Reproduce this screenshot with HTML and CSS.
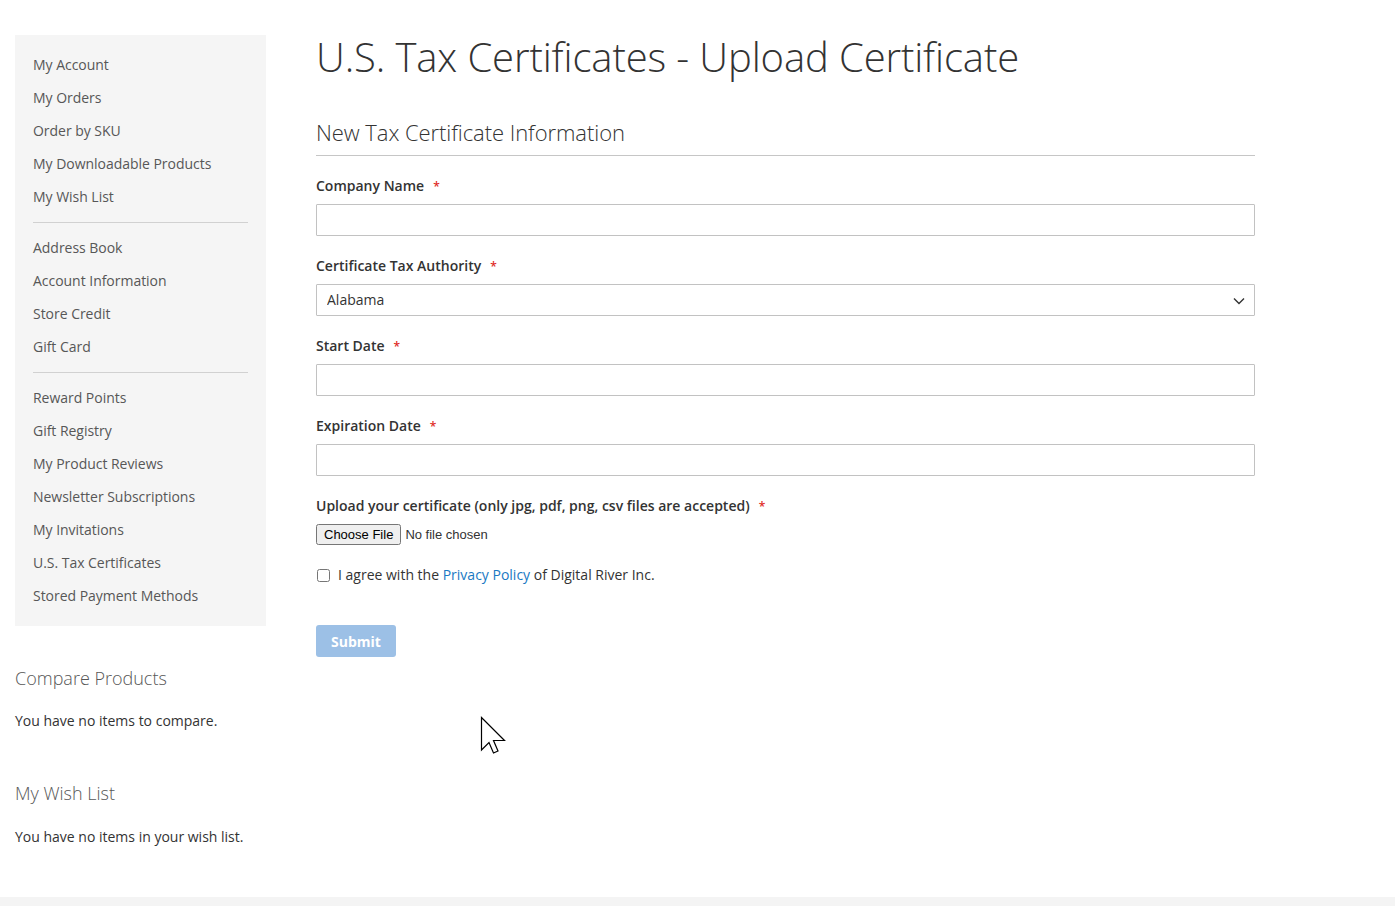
FILE: index.html
```html
<!DOCTYPE html>
<html lang="en">
<head>
<meta charset="utf-8">
<title>U.S. Tax Certificates - Upload Certificate</title>
<link rel="stylesheet" href="styles.css">
</head>
<body>
<div class="page">
  <aside class="sidebar">
    <nav class="account-nav">
      <ul class="nav-list">
        <li class="nav-item">My Account</li>
        <li class="nav-item">My Orders</li>
        <li class="nav-item">Order by SKU</li>
        <li class="nav-item">My Downloadable Products</li>
        <li class="nav-item">My Wish List</li>
        <li class="nav-delimiter"></li>
        <li class="nav-item">Address Book</li>
        <li class="nav-item">Account Information</li>
        <li class="nav-item">Store Credit</li>
        <li class="nav-item">Gift Card</li>
        <li class="nav-delimiter"></li>
        <li class="nav-item">Reward Points</li>
        <li class="nav-item">Gift Registry</li>
        <li class="nav-item">My Product Reviews</li>
        <li class="nav-item">Newsletter Subscriptions</li>
        <li class="nav-item">My Invitations</li>
        <li class="nav-item">U.S. Tax Certificates</li>
        <li class="nav-item">Stored Payment Methods</li>
      </ul>
    </nav>
    <div class="side-block compare-block">
      <div class="side-title">Compare Products</div>
      <div class="side-text">You have no items to compare.</div>
    </div>
    <div class="side-block wish-block">
      <div class="side-title">My Wish List</div>
      <div class="side-text">You have no items in your wish list.</div>
    </div>
  </aside>
  <main class="main">
    <h1 class="page-title">U.S. Tax Certificates - Upload Certificate</h1>
    <form class="form">
      <div class="legend">New Tax Certificate Information</div>
      <div class="field">
        <label class="label">Company Name<span class="req">*</span></label>
        <input class="input" type="text">
      </div>
      <div class="field">
        <label class="label">Certificate Tax Authority<span class="req">*</span></label>
        <div class="select-wrap">
          <select class="input select">
            <option>Alabama</option>
          </select>
          <svg class="chev" width="12" height="8" viewBox="0 0 12 8"><path d="M1 1.5 L6 6.5 L11 1.5" fill="none" stroke="#333" stroke-width="1.4"/></svg>
        </div>
      </div>
      <div class="field">
        <label class="label">Start Date<span class="req">*</span></label>
        <input class="input" type="text">
      </div>
      <div class="field">
        <label class="label">Expiration Date<span class="req">*</span></label>
        <input class="input" type="text">
      </div>
      <div class="field">
        <label class="label">Upload your certificate (only jpg, pdf, png, csv files are accepted)<span class="req">*</span></label>
        <input class="file" type="file">
      </div>
      <div class="agree">
        <input class="check" type="checkbox">
        <span>I agree with the <a class="link" href="#">Privacy Policy</a> of Digital River Inc.</span>
      </div>
      <button class="submit" type="button" disabled>Submit</button>
    </form>
  </main>
</div>
<footer class="footer"></footer>
<svg class="cursor" width="28" height="40" viewBox="0 0 28 40"><path d="M1.5 1.5 L1.5 34 L9 26.5 L13.5 37 L18 35 L13.5 24.5 L24.5 24.5 Z" fill="#fff" stroke="#000" stroke-width="1.2" stroke-linejoin="miter"/></svg>
</body>
</html>
```
FILE: styles.css
```css
html, body {
  margin: 0;
  padding: 0;
}
body {
  font-family: "Open Sans", "Liberation Sans", sans-serif;
  font-size: 14px;
  color: #333;
  background: #fff;
  position: relative;
  min-height: 906px;
}
.page {
  display: flex;
  padding: 35px 0 0 15px;
  height: 862px;
}
.sidebar {
  width: 251px;
  flex: none;
}
.account-nav {
  background: #f5f5f5;
  padding: 13px 0 14px;
}
.nav-list {
  list-style: none;
  margin: 0;
  padding: 0;
}
.nav-item {
  line-height: 33px;
  height: 33px;
  padding-left: 18px;
  color: #575757;
  font-size: 14px;
  letter-spacing: -0.03px;
}
.nav-delimiter {
  border-top: 1px solid #d1d1d1;
  margin: 9px 18px 8px;
}
.side-block .side-title {
  font-size: 18px;
  font-weight: 300;
  line-height: 22px;
  color: #575757;
}
.side-block .side-text {
  margin-top: 21px;
  line-height: 20px;
  color: #333;
}
.compare-block { margin-top: 41px; }
.compare-block .side-text { margin-top: 22px; }
.wish-block { margin-top: 51px; }
.wish-block .side-text { margin-top: 23px; }
.main {
  margin-left: 50px;
  width: 939px;
}
.page-title {
  margin: 0;
  font-size: 40px;
  font-weight: 300;
  line-height: 44px;
  color: #333;
  letter-spacing: -0.12px;
}
.form {
  margin: 0;
}
.legend {
  margin-top: 40px;
  font-size: 22px;
  font-weight: 300;
  line-height: 26px;
  padding-bottom: 10px;
  border-bottom: 1px solid #c6c6c6;
  letter-spacing: -0.06px;
}
.field {
  margin-top: 20px;
  display: flex;
  flex-direction: column;
}
.label {
  display: block;
  height: 20px;
  font-weight: 600;
  line-height: 20px;
  margin-bottom: 8px;
  color: #333;
}
.req {
  color: #e02b27;
  font-size: 12px;
  line-height: 1;
  margin-left: 9px;
}
.input {
  display: block;
  box-sizing: border-box;
  height: 32px;
  width: 100%;
  border: 1px solid #c2c2c2;
  background: #fff;
  font-family: "Open Sans", "Liberation Sans", sans-serif;
  font-size: 14px;
  color: #333;
  padding: 0 9px;
  margin: 0;
  border-radius: 1px;
}
.select-wrap {
  position: relative;
  height: 32px;
}
.select {
  appearance: none;
  -webkit-appearance: none;
  padding: 0 10px 2px;
}
.chev {
  position: absolute;
  right: 10px;
  top: 13px;
  pointer-events: none;
}
.file {
  display: block;
  margin: 0;
  font-size: 13px;
  height: 21px;
}
.agree {
  margin-top: 20px;
  display: flex;
  align-items: center;
  height: 20px;
  line-height: 20px;
  color: #333;
}
.check {
  margin: 0 8px 0 1px;
  width: 13px;
  height: 13px;
}
.link {
  color: #1979c3;
  text-decoration: none;
}
.submit {
  margin-top: 40px;
  display: block;
  height: 32px;
  width: 80px;
  border: none;
  border-radius: 3px;
  background: #9cc0e6;
  color: #fff;
  font-family: "Open Sans", "Liberation Sans", sans-serif;
  font-weight: 700;
  font-size: 14px;
  padding: 0;
}
.footer {
  height: 9px;
  background: #f4f4f4;
}
.cursor {
  position: absolute;
  left: 480px;
  top: 716px;
}
```
